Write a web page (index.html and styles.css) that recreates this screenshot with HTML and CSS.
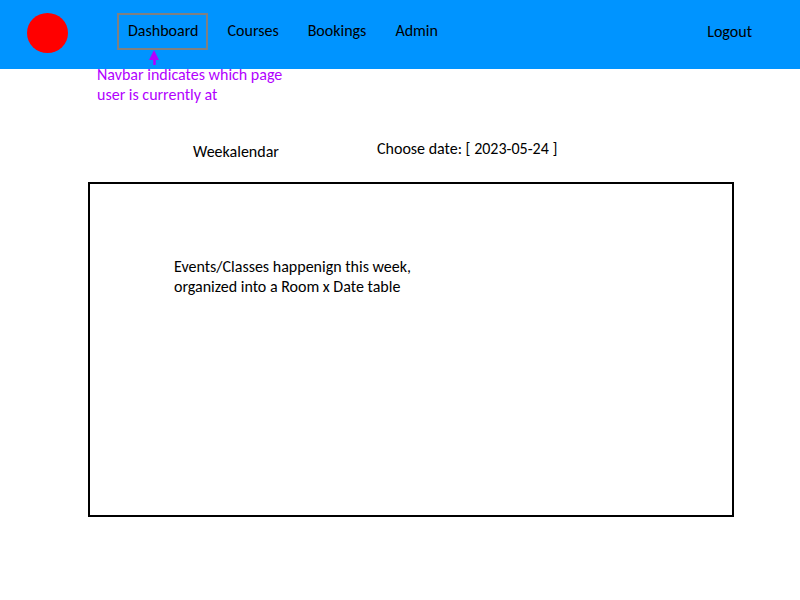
FILE: index.html
```html
<!DOCTYPE html>
<html lang="en">
<head>
<meta charset="utf-8">
<title>Dashboard</title>
<link rel="stylesheet" href="styles.css">
</head>
<body>
<header class="navbar">
  <div class="logo"></div>
  <nav class="links">
    <div class="link active">Dashboard
      <div class="note">
        <svg class="arrow" width="12" height="16" viewBox="0 0 12 16"><path d="M6.5 15V8" stroke="#b200ff" stroke-width="2.6"/><path d="M6 0L11 10H1Z" fill="#b200ff"/></svg>
        <p>Navbar indicates which page</p>
        <p>user is currently at</p>
      </div>
    </div>
    <div class="link">Courses</div>
    <div class="link">Bookings</div>
    <div class="link">Admin</div>
  </nav>
  <div class="logout">Logout</div>
</header>
<main class="content">
  <div class="toolbar">
    <h1 class="title">Weekalendar</h1>
    <div class="date">Choose date: [ 2023-05-24 ]</div>
  </div>
  <section class="calendar">
    <p>Events/Classes happenign this week,</p>
    <p>organized into a Room x Date table</p>
  </section>
</main>
</body>
</html>
```
FILE: styles.css
```css
* { box-sizing: border-box; }
body { margin: 0; background: #fff; color: #000; font: 16px/20px Carlito, Lato, sans-serif; font-variant-ligatures: none; white-space: nowrap; }
p, h1 { margin: 0; font: inherit; }
.navbar { display: flex; height: 69px; background: #0094ff; padding: 13px 48px 0 27px; }
.logo { width: 41px; height: 40px; border-radius: 50%; background: #f00; }
.links { display: flex; margin-left: 49px; }
.link { height: 37px; padding-top: 8px; margin-right: 29px; }
.active { position: relative; width: 91px; border: 2px solid #808080; padding: 6px 0 0 9px; margin-right: 19.5px; }
.note { position: absolute; left: -22px; top: 50px; color: #b200ff; }
.arrow { position: absolute; left: 51px; top: -15px; }
.logout { margin-left: auto; padding-top: 9px; }
.content { padding: 73px 66px 0 88px; }
.toolbar { display: flex; padding-left: 105px; height: 40px; }
.title { width: 184px; }
.date { margin-top: -3px; }
.calendar { height: 335px; border: 2px solid #000; padding: 73px 0 0 84px; }
```
